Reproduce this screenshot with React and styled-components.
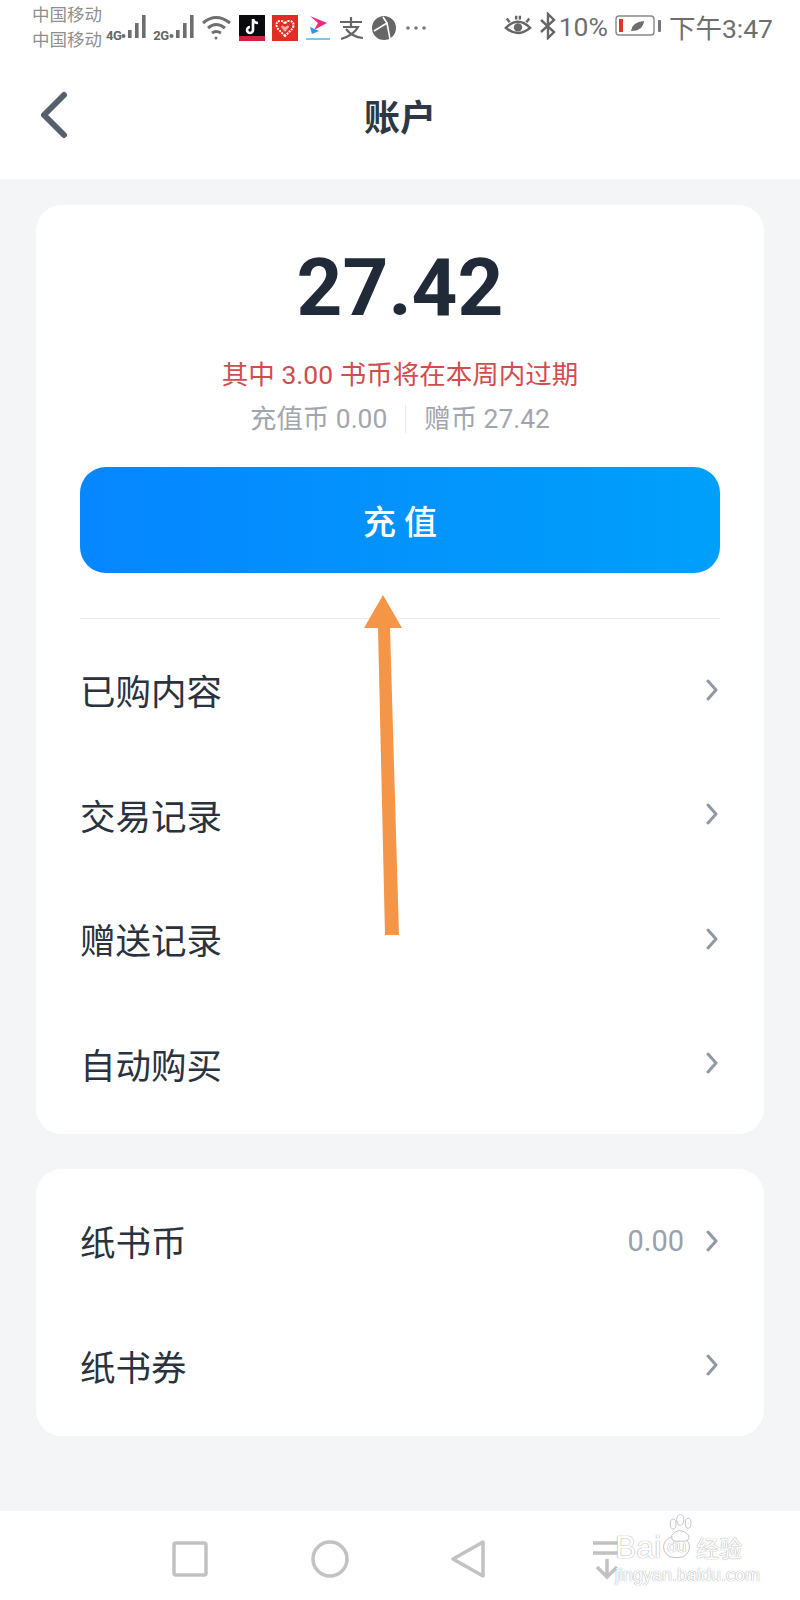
import styled, { createGlobalStyle } from "styled-components";

const GlobalStyle = createGlobalStyle`
  html, body {
    margin: 0;
    padding: 0;
    background: #f3f5f7;
  }
  body {
    font-family: Roboto, "Noto Sans CJK SC", sans-serif;
  }
`;

const Page = styled.div`
  position: relative;
  width: 800px;
  height: 1600px;
  overflow: hidden;
  display: flex;
  flex-direction: column;
  background: #f3f5f7;
`;

const Top = styled.div`
  background: #fff;
  height: 179px;
  flex: none;
`;

const StatusBar = styled.div`
  height: 56px;
  padding: 0 27px 0 32px;
  display: flex;
  align-items: center;
  color: #6e6e6e;
`;

const Carriers = styled.div`
  width: 74px;
  font-size: 17.5px;
  line-height: 25.5px;
  color: #8f8f8f;
  white-space: nowrap;
`;

const StatusLeft = styled.div`
  display: flex;
  align-items: center;
  gap: 6px;
`;

const AppIcons = styled.div`
  display: flex;
  align-items: center;
  gap: 7px;
`;

const StatusRight = styled.div`
  margin-left: auto;
  padding-bottom: 4px;
  display: flex;
  align-items: center;
  font-size: 26.5px;
`;

const Clock = styled.span`
  margin-left: 8px;
`;

const Header = styled.div`
  position: relative;
  height: 118px;
  display: flex;
  align-items: center;
  justify-content: center;
`;

const BackIcon = styled.svg`
  position: absolute;
  left: 38px;
  top: 35px;
`;

const Title = styled.div`
  font-size: 36px;
  font-weight: 700;
  color: #2f3744;
`;

const Body = styled.div`
  flex: 1;
  padding: 26px 36px 0;
  display: flex;
  flex-direction: column;
  gap: 35px;
`;

const Card = styled.div`
  background: #fff;
  border-radius: 26px;
`;

const Summary = styled.div`
  padding: 0 44px;
  text-align: center;
`;

const Amount = styled.div`
  padding-top: 28px;
  height: 110px;
  font-size: 80px;
  line-height: 110px;
  font-weight: 700;
  color: #212a39;
`;

const Warning = styled.div`
  margin-top: 12px;
  font-size: 26.5px;
  line-height: 40px;
  color: #d24c4e;
`;

const Balances = styled.div`
  margin-top: 4px;
  display: flex;
  justify-content: center;
  align-items: center;
  font-size: 26.4px;
  line-height: 40px;
  color: #a1a6ad;
`;

const BalanceDivider = styled.span`
  width: 1px;
  height: 28px;
  margin: 0 18px;
  background: #e6e8ea;
`;

const TopUp = styled.div`
  margin-top: 28px;
  height: 106px;
  border-radius: 26px;
  display: flex;
  align-items: center;
  justify-content: center;
  background: linear-gradient(90deg, #0686ff, #00a0fa);
  color: #fff;
  font-size: 33px;
  font-weight: 500;
  letter-spacing: 8px;
  text-indent: 8px;
`;

const Rule = styled.div`
  margin-top: 45px;
  height: 1px;
  background: #e9ebed;
`;

const List = styled.div`
  padding: ${(p) => p.$pad};
`;

const Row = styled.div`
  height: 124.5px;
  box-sizing: border-box;
  padding: 0 45px 7px 44px;
  display: flex;
  align-items: center;
  font-size: 35.5px;
  color: #2a323e;
`;

const RowValue = styled.span`
  margin-left: auto;
  margin-right: 21px;
  font-size: 29px;
  color: #9aa1aa;
`;

const Chevron = styled.svg`
  margin-left: ${(p) => (p.$auto ? "auto" : "0")};
`;

const NavBar = styled.div`
  height: 89px;
  flex: none;
  background: #fff;
  display: flex;
  align-items: flex-start;
  padding-top: 26px;
  box-sizing: border-box;
`;

const NavIcon = styled.svg`
  position: relative;
  left: 168px;
  width: 44px;
  height: 44px;
  margin-right: ${(p) => p.$gap}px;
`;

const Arrow = styled.svg`
  position: absolute;
  left: 355px;
  top: 590px;
`;

const Watermark = styled.div`
  position: absolute;
  left: 615px;
  top: 1531px;
  width: 150px;
  color: #fff;
  font-family: "Liberation Sans", sans-serif;
  text-shadow: 0 0 1px #a8a8a8, 0 0 1px #a8a8a8;
`;

const MarkTitle = styled.div`
  display: flex;
  align-items: center;
  height: 32px;
  font-size: 32px;
  white-space: nowrap;
`;

const MarkDu = styled.span`
  margin: 0 6px 0 2px;
  padding: 0 3px;
  font-size: 17px;
  border: 1px solid #c4c4c4;
  border-radius: 12px;
`;

const MarkCn = styled.span`
  font-size: 23px;
  font-family: "Noto Sans CJK SC", sans-serif;
`;

const MarkUrl = styled.div`
  margin-top: 2px;
  font-size: 18px;
  line-height: 20px;
  white-space: nowrap;
`;

const Paw = styled.svg`
  position: absolute;
  left: 45px;
  top: -17px;
`;

const NetTag = styled.span`
  font-size: 13px;
  font-weight: 700;
  letter-spacing: -0.5px;
  align-self: flex-start;
  margin: 14px -6px 0 0;
  color: #666;
`;

const BluetoothIcon = styled.svg`
  margin: 0 2px 0 7px;
`;

const BatteryIcon = styled.svg`
  margin-left: 7px;
`;

const Signal = () => (
  <svg width="26" height="26" viewBox="0 0 26 26" fill="#6e6e6e">
    <circle cx="2.5" cy="21" r="2" />
    <rect x="7" y="15" width="3.6" height="8" />
    <rect x="14" y="8" width="3.6" height="15" />
    <rect x="21" y="0" width="3.6" height="23" />
  </svg>
);

const Wifi = () => (
  <svg width="32" height="26" viewBox="0 0 32 26" fill="none" stroke="#6e6e6e" strokeWidth="3">
    <path d="M2 8 Q15 -3 29 8" />
    <path d="M7 13 Q15 6 24 13" />
    <path d="M11 18 Q15 15 20 18" />
    <circle cx="15" cy="23" r="1.5" fill="#6e6e6e" stroke="none" />
  </svg>
);

const TikTok = () => (
  <svg width="26" height="26" viewBox="0 0 26 26">
    <rect width="26" height="26" fill="#0b0b0f" />
    <rect y="21" width="26" height="5" fill="#d4213f" />
    <path d="M14 4v11a3 3 0 1 1-3-3M14 4q1 4 5 4" fill="none" stroke="#fff" strokeWidth="2.6" />
  </svg>
);

const Pinduoduo = () => (
  <svg width="26" height="26" viewBox="0 0 26 26">
    <rect width="26" height="26" fill="#e02e24" />
    <path d="M13 21 L5 13 Q3 6 9 6 Q12 6 13 9 Q14 6 17 6 Q23 6 21 13Z" fill="none" stroke="#fff" strokeWidth="2" strokeDasharray="2 1" />
    <path d="M13 17 L9 12 Q9 9 13 12 Q17 9 17 12Z" fill="#fff" opacity="0.6" />
  </svg>
);

const Video = () => (
  <svg width="26" height="26" viewBox="0 0 26 26">
    <path d="M5 1 L22 8 L9 15 L13 8Z" fill="#ec2a7e" />
    <path d="M5 12 L14 16 L7 19Z" fill="#1f9ce6" />
    <rect x="1" y="23" width="24" height="2" fill="#7cc6ea" />
  </svg>
);

const Alipay = () => (
  <svg width="26" height="26" viewBox="0 0 26 26" fill="none" stroke="#666" strokeWidth="2.2">
    <path d="M2 7H24M13 2V11M5 12H20Q16 20 3 24M8 14Q14 22 25 23" />
  </svg>
);

const Globe = () => (
  <svg width="26" height="26" viewBox="0 0 26 26">
    <circle cx="13" cy="13" r="12" fill="#666" />
    <path d="M3 16 L16 8 L19 24M16 8 L12 2" fill="none" stroke="#fff" strokeWidth="1.6" />
  </svg>
);

const Eye = () => (
  <svg width="28" height="26" viewBox="0 0 30 26" fill="none" stroke="#666" strokeWidth="2.6">
    <path d="M2 15 Q15 2 28 15 Q15 26 2 15Z" />
    <circle cx="15" cy="14.5" r="4.5" fill="#666" stroke="none" />
    <path d="M3 5 L6 9M13 2V6M17 2V6M27 5 L24 9" />
  </svg>
);

const Bluetooth = () => (
  <BluetoothIcon width="18" height="28" viewBox="0 0 18 28" fill="none" stroke="#666" strokeWidth="2.4">
    <path d="M2 8 L15 20 L9 26 V2 L15 8 L2 20" />
  </BluetoothIcon>
);

const Battery = () => (
  <BatteryIcon width="46" height="24" viewBox="0 0 46 24">
    <rect x="1" y="2" width="38" height="19" rx="3" fill="none" stroke="#888" strokeWidth="1.4" />
    <rect x="4" y="5" width="4" height="13" fill="#e0342a" />
    <path d="M16 17 Q17 8 29 7 Q28 17 16 17Z" fill="#6e6e6e" />
    <rect x="43" y="6" width="3" height="12" rx="1" fill="#777" />
  </BatteryIcon>
);

const RowChevron = ({ auto }) => (
  <Chevron $auto={auto} width="14" height="22" viewBox="0 0 14 22" fill="none" stroke="#8f98a3" strokeWidth="3" strokeLinecap="round" strokeLinejoin="round">
    <path d="M3 2 L11 11 L3 20" />
  </Chevron>
);

const menu = ["已购内容", "交易记录", "赠送记录", "自动购买"];

export default function App() {
  return (
    <Page>
      <GlobalStyle />
      <Top>
        <StatusBar>
          <Carriers>
            中国移动
            <br />
            中国移动
          </Carriers>
          <StatusLeft>
            <NetTag>4G</NetTag>
            <Signal />
            <NetTag>2G</NetTag>
            <Signal />
            <Wifi />
            <AppIcons>
              <TikTok />
              <Pinduoduo />
              <Video />
              <Alipay />
              <Globe />
              <svg width="24" height="26" viewBox="0 0 24 26" fill="#777">
                <circle cx="4" cy="13" r="1.8" />
                <circle cx="12" cy="13" r="1.8" />
                <circle cx="20" cy="13" r="1.8" />
              </svg>
            </AppIcons>
          </StatusLeft>
          <StatusRight>
            <Eye />
            <Bluetooth />
            10%
            <Battery />
            <Clock>下午3:47</Clock>
          </StatusRight>
        </StatusBar>
        <Header>
          <BackIcon width="32" height="48" viewBox="0 0 32 48" fill="none" stroke="#56606c" strokeWidth="6" strokeLinecap="round" strokeLinejoin="round">
            <path d="M26 4 L6 24 L26 44" />
          </BackIcon>
          <Title>账户</Title>
        </Header>
      </Top>
      <Body>
        <Card>
          <Summary>
            <Amount>27.42</Amount>
            <Warning>其中 3.00 书币将在本周内过期</Warning>
            <Balances>
              <span>充值币 0.00</span>
              <BalanceDivider />
              <span>赠币 27.42</span>
            </Balances>
            <TopUp>充值</TopUp>
            <Rule />
          </Summary>
          <List $pad="12px 0 5px">
            {menu.map((label) => (
              <Row key={label}>
                {label}
                <RowChevron auto />
              </Row>
            ))}
          </List>
        </Card>
        <Card>
          <List $pad="13px 0 5px">
            <Row>
              纸书币
              <RowValue>0.00</RowValue>
              <RowChevron />
            </Row>
            <Row>
              纸书券
              <RowChevron auto />
            </Row>
          </List>
        </Card>
      </Body>
      <NavBar>
        <NavIcon $gap={96} viewBox="0 0 44 44" fill="none" stroke="#c2c2c2" strokeWidth="3.5" strokeLinejoin="round">
          <rect x="6" y="6" width="32" height="32" rx="2" />
        </NavIcon>
        <NavIcon $gap={96} viewBox="0 0 44 44" fill="none" stroke="#c2c2c2" strokeWidth="3.5">
          <circle cx="22" cy="22" r="17" />
        </NavIcon>
        <NavIcon $gap={96} viewBox="0 0 44 44" fill="none" stroke="#c2c2c2" strokeWidth="3.5" strokeLinejoin="round">
          <path d="M35 5 V39 L5 22Z" />
        </NavIcon>
        <NavIcon $gap={0} viewBox="0 0 44 44" fill="none" stroke="#c2c2c2" strokeWidth="3.5">
          <path d="M5 6 H33M5 16 H33M19 22 V40M9 30 L19 40 L29 30" />
        </NavIcon>
      </NavBar>
      <Arrow width="56" height="352" viewBox="0 0 56 352" fill="#f49548">
        <path d="M28 5 L47 38 L35 38 L44 345 L30 345 L23 38 L9 38Z" />
      </Arrow>
      <Watermark>
        <Paw width="42" height="30" viewBox="0 0 42 42" fill="#fff" stroke="#c4c4c4" strokeWidth="1.4">
          <ellipse cx="10" cy="14" rx="4" ry="7" />
          <ellipse cx="20" cy="8" rx="5" ry="8" />
          <ellipse cx="31" cy="13" rx="4" ry="7" />
          <path d="M8 30 Q18 16 32 30 Q34 40 20 38 Q6 40 8 30Z" />
        </Paw>
        <MarkTitle>
          Bai
          <MarkDu>du</MarkDu>
          <MarkCn>经验</MarkCn>
        </MarkTitle>
        <MarkUrl>jingyan.baidu.com</MarkUrl>
      </Watermark>
    </Page>
  );
}
